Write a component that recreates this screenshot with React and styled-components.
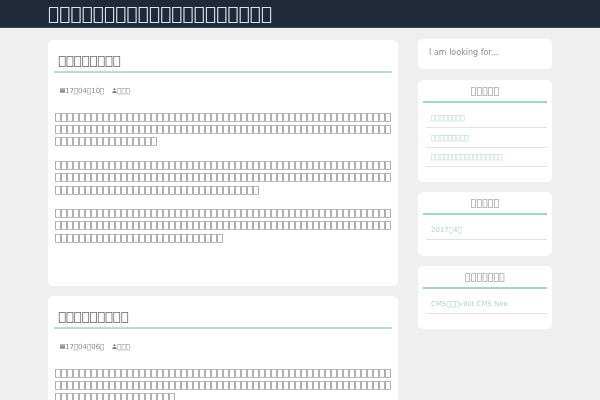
import React from 'react'
import styled, { createGlobalStyle } from 'styled-components'

const GlobalStyle = createGlobalStyle`
  html, body { margin: 0; padding: 0; }
  body {
    background: #efefef;
    font-family: "DejaVu Sans", sans-serif;
    height: 400px;
    overflow: hidden;
  }
  #root { will-change: transform; }
  ul { list-style: none; margin: 0; padding: 0; }
`

const tofu = n => '\uE000'.repeat(n)

const Header = styled.header`
  height: 27px;
  background: #1e2a3a;
  border-bottom: 1px solid #39424f;
  padding-left: 48px;
`

const SiteTitle = styled.h1`
  margin: 0;
  font-size: 18.7px;
  line-height: 27px;
  font-weight: 400;
  color: #dbe4ea;
  white-space: nowrap;
`

const Layout = styled.div`
  display: grid;
  grid-template-columns: 350px 134px;
  column-gap: 20px;
  width: 504px;
  margin: 12px 0 0 48px;
`

const Card = styled.article`
  background: #fff;
  border-radius: 5px;
  padding: 6px 6px 0;
  height: ${p => p.$height}px;
  margin-bottom: 10px;
  box-sizing: border-box;
`

const PostTitle = styled.h2`
  margin: 0;
  padding: 4px 0 0 4px;
  font-size: 13px;
  line-height: 21px;
  font-weight: 400;
  color: #666;
  border-bottom: 2px solid #bcdcd4;
`

const Meta = styled.div`
  display: flex;
  gap: 8px;
  align-items: center;
  margin: 12px 0 13.5px 6px;
  font-size: 7px;
  line-height: 12px;
  color: #888;
`

const Body = styled.p`
  margin: 0 0 11px 1px;
  font-size: 10px;
  line-height: 12.4px;
  color: #777;
  overflow-wrap: anywhere;
`

const Side = styled.aside`
  display: flex;
  flex-direction: column;
  gap: 10px;
`

const Search = styled.div`
  background: #fff;
  border-radius: 5px;
  height: 30px;
  margin: -1px 0 1px;
  padding-left: 11px;
  font-size: 8px;
  line-height: 28px;
  color: #8f8f8f;
`

const Widget = styled.section`
  background: #fff;
  border-radius: 5px;
  padding: 0 5px;
  height: ${p => p.$height}px;
  box-sizing: border-box;
`

const WidgetTitle = styled.h3`
  margin: 0 0 6px;
  font-size: 9.5px;
  line-height: 20px;
  padding-top: 1px;
  font-weight: 400;
  text-align: center;
  color: #888;
  border-bottom: 2px solid #a9d3c7;
`

const Item = styled.li`
  margin-left: 3px;
  padding: 1.4px 0 0 5px;
  font-size: 7px;
  line-height: 16.9px;
  color: #b0d6cb;
  border-bottom: 1px solid #e4e4e4;
`

function CalendarIcon () {
  return (
    <svg width="5" height="5" viewBox="0 0 6 6" fill="#888">
      <rect y="0.5" width="6" height="1.6" />
      <rect y="2.6" width="6" height="3" />
    </svg>
  )
}

function UserIcon () {
  return (
    <svg width="5" height="5" viewBox="0 0 6 6" fill="#777">
      <circle cx="3" cy="1.5" r="1.3" />
      <path d="M0.5 6 V4.5 Q3 2.5 5.5 4.5 V6 Z" />
    </svg>
  )
}

function MetaLine ({ date }) {
  return (
    <Meta>
      <span><CalendarIcon />{date}</span>
      <span><UserIcon />{tofu(3)}</span>
    </Meta>
  )
}

function App () {
  const mark = tofu(1)
  return (
    <>
      <GlobalStyle />
      <Header>
        <SiteTitle>{tofu(20)}</SiteTitle>
      </Header>
      <Layout>
        <main>
          <Card $height={246}>
            <PostTitle>{tofu(8)}</PostTitle>
            <MetaLine date={`17${mark}04${mark}10${mark}`} />
            <Body>{tofu(129)}</Body>
            <Body>{tofu(146)}</Body>
            <Body>{tofu(140)}</Body>
          </Card>
          <Card $height={200}>
            <PostTitle>{tofu(9)}</PostTitle>
            <MetaLine date={`17${mark}04${mark}06${mark}`} />
            <Body>{tofu(132)}</Body>
          </Card>
        </main>
        <Side>
          <Search>I am looking for...</Search>
          <Widget $height={102}>
            <WidgetTitle>{tofu(5)}</WidgetTitle>
            <ul>
              <Item>{tofu(8)}</Item>
              <Item>{tofu(9)}</Item>
              <Item>{tofu(17)}</Item>
            </ul>
          </Widget>
          <Widget $height={64}>
            <WidgetTitle>{tofu(5)}</WidgetTitle>
            <ul>
              <Item>2017{mark}4{mark}</Item>
            </ul>
          </Widget>
          <Widget $height={63}>
            <WidgetTitle>{tofu(7)}</WidgetTitle>
            <ul>
              <Item>CMS{tofu(3)}vibit CMS Neo</Item>
            </ul>
          </Widget>
        </Side>
      </Layout>
    </>
  )
}

export default App
